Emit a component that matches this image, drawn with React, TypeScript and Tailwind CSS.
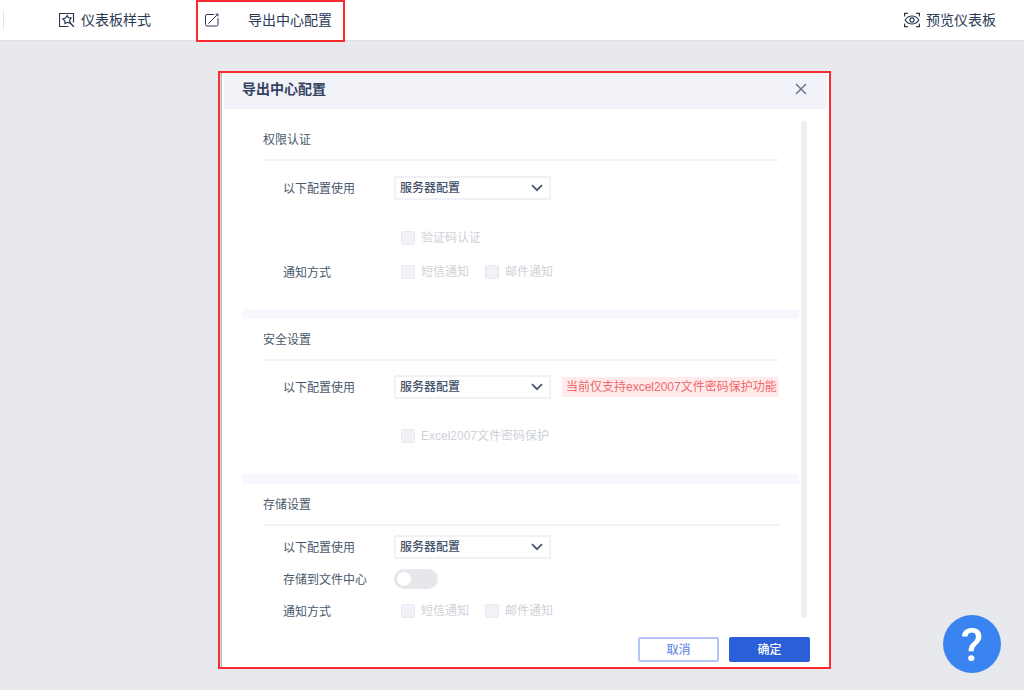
import { useState, type ReactNode } from "react";

const FONT = "font-['Liberation_Sans','Noto_Sans_CJK_SC',sans-serif]";

function StyleIcon() {
  return (
    <svg width="16" height="16" viewBox="0 0 16 16" fill="none" stroke="currentColor" strokeWidth="1.2" aria-hidden="true">
      <path d="M9.5 14.5h-9v-13h14v9" />
      <path d="M8.2 3.6l1.2 2.1 2.7.3-1.5 2.2.6 2.7-2.7-.6-2.5 1.3-.2-2.8-2.1-1.8 2.7-.9z" />
      <path d="M11 10.8l3.8 4" strokeWidth="1.5" />
    </svg>
  );
}

function ExportIcon() {
  return (
    <svg width="14" height="14" viewBox="0 0 14 14" fill="none" stroke="currentColor" strokeWidth="1" aria-hidden="true">
      <path d="M9 1.5H2A1.5 1.5 0 0 0 .5 3v8.500A1.500 1.500 0 0 0 2 13h9.500a1.500 1.500 0 0 0 1.500-1.500V5" />
      <path d="M3.500 10.500L12.800 1.200M10.500 1h2.500v2.500" />
    </svg>
  );
}

function PreviewIcon() {
  return (
    <svg width="16" height="16" viewBox="0 0 16 16" fill="none" stroke="currentColor" strokeWidth="1.2" aria-hidden="true">
      <path d="M.6 4.500V1.400h3.400M12 1.400h3.400v3.100M15.400 11.500v3.100H12M4 14.600H.6v-3.100" />
      <path d="M1.200 8C2.700 5.400 5.200 4 8 4s5.300 1.400 6.800 4c-1.500 2.600-4 4-6.800 4S2.700 10.600 1.200 8z" />
      <circle cx="8" cy="8" r="2.100" />
    </svg>
  );
}

interface SectionProps {
  title: string;
  className: string;
  children: ReactNode;
}

function Section({ title, className, children }: SectionProps) {
  return (
    <section className="pr-5 pl-[21px]">
      <h3 className="flex h-[42px] items-center border-b-2 border-[#f3f3f5] pt-[2px]">{title}</h3>
      <div className={`flex flex-col pl-5 ${className}`}>{children}</div>
    </section>
  );
}

function Divider() {
  return <div className="h-[10px] bg-[#f7f8fd]" />;
}

interface RowProps {
  label?: string;
  htmlFor?: string;
  children: ReactNode;
}

function Row({ label, htmlFor, children }: RowProps) {
  return (
    <div className="flex h-6 items-center">
      <div className="w-[111px] shrink-0 pt-[2px]">
        {htmlFor ? <label htmlFor={htmlFor}>{label}</label> : label}
      </div>
      {children}
    </div>
  );
}

function ConfigSelect({ id }: { id: string }) {
  return (
    <div className="relative h-6 w-[157px] shrink-0">
      <select
        id={id}
        className="block h-6 w-full appearance-none rounded-xs border-2 border-[#f0f1f4] bg-white pr-6 pl-1 font-medium text-[#44526a]"
      >
        <option>服务器配置</option>
      </select>
      <svg
        className="pointer-events-none absolute top-2 right-2"
        width="12"
        height="8"
        viewBox="0 0 12 8"
        fill="none"
        stroke="#4a5a6e"
        strokeWidth="1.8"
        aria-hidden="true"
      >
        <path d="M1 1.2l5 5 5-5" />
      </svg>
    </div>
  );
}

function DisabledCheck({ label }: { label: string }) {
  return (
    <label className="flex items-center gap-[6px] text-[#ced2d8]">
      <input
        type="checkbox"
        disabled
        className="h-[14px] w-[14px] appearance-none rounded-xs border border-[#e8eaf0] bg-[#f2f3f8]"
      />
      {label}
    </label>
  );
}

function NoticeRow() {
  return (
    <Row label="通知方式">
      <div className="flex gap-4 pl-[7px]">
        <DisabledCheck label="短信通知" />
        <DisabledCheck label="邮件通知" />
      </div>
    </Row>
  );
}

function ExportDialog() {
  const [toFileCenter, setToFileCenter] = useState(false);

  return (
    <div
      role="dialog"
      aria-labelledby="dialog-title"
      className="mx-auto w-full max-w-[613px] border-2 border-[#fb2a30] bg-[#d9dbdf] pl-px text-xs text-[#4a586c]"
    >
      <div className="border-l border-[#b4b7bc] bg-white">
        <header className="mx-[2px] flex h-9 items-center justify-between bg-[#f2f3f8] pr-[18px] pb-1 pl-[18px]">
          <h2 id="dialog-title" className="text-sm font-bold text-[#34435f]">
            导出中心配置
          </h2>
          <button type="button" aria-label="关闭" className="flex h-4 w-4 items-center justify-center text-[#6a7890]">
            <svg width="12" height="12" viewBox="0 0 12 12" fill="none" stroke="currentColor" strokeWidth="1.5" aria-hidden="true">
              <path d="M1 1l10 10M11 1L1 11" />
            </svg>
          </button>
        </header>

        <div className="flex gap-[2px] pt-[10px] pr-[22px] pl-5">
          <div className="min-w-0 flex-1">
            <Section title="权限认证" className="pt-[15px] pb-[25px]">
              <Row label="以下配置使用" htmlFor="auth-config">
                <ConfigSelect id="auth-config" />
              </Row>
              <div className="flex flex-col gap-[10px] pt-[26px]">
                <Row>
                  <div className="pl-[7px]">
                    <DisabledCheck label="验证码认证" />
                  </div>
                </Row>
                <NoticeRow />
              </div>
            </Section>
            <Divider />
            <Section title="安全设置" className="pt-[14px] pb-[26px]">
              <Row label="以下配置使用" htmlFor="security-config">
                <ConfigSelect id="security-config" />
                <span className="ml-[11px] h-5 min-w-0 flex-1 overflow-hidden bg-[#ffebeb] pl-1 leading-5 whitespace-nowrap text-[#f0686a]">
                  当前仅支持excel2007文件密码保护功能
                </span>
              </Row>
              <div className="pt-[25px]">
                <Row>
                  <div className="pl-[7px]">
                    <DisabledCheck label="Excel2007文件密码保护" />
                  </div>
                </Row>
              </div>
            </Section>
            <Divider />
            <Section title="存储设置" className="gap-2 pt-[9px]">
              <Row label="以下配置使用" htmlFor="storage-config">
                <ConfigSelect id="storage-config" />
              </Row>
              <Row label="存储到文件中心" htmlFor="file-center">
                <input
                  id="file-center"
                  type="checkbox"
                  role="switch"
                  checked={toFileCenter}
                  onChange={(e) => setToFileCenter(e.target.checked)}
                  className="flex h-5 w-11 appearance-none items-center rounded-full bg-[#e6e7eb] px-[3px] before:h-[14px] before:w-[14px] before:rounded-full before:bg-white checked:justify-end checked:bg-[#2b5fda]"
                />
              </Row>
              <NoticeRow />
            </Section>
          </div>
          <div className="mt-[2px] mb-[5px] w-[6px] rounded-full bg-[#edeef2]" />
        </div>

        <footer className="flex justify-end gap-[10px] pt-[14px] pr-[19px] pb-[5px]">
          <button type="button" className="h-[25px] w-[81px] rounded-xs border-2 border-[#b4c6f5] bg-white font-medium text-[#6f90e8]">
            取消
          </button>
          <button type="button" className="h-[25px] w-[81px] rounded-xs bg-[#2b5fda] font-medium text-white">
            确定
          </button>
        </footer>
      </div>
    </div>
  );
}

export default function App() {
  return (
    <div className={`min-h-screen bg-[#e8e9ed] ${FONT}`}>
      <nav className="flex h-[41px] items-center border-b border-[#dfe1e5] bg-white text-sm text-[#2b3a55]">
        <div className="ml-[3px] h-5 w-px bg-[#e3e5e9]" />
        <button type="button" className="ml-[55px] flex items-center gap-[6px]">
          <StyleIcon />
          仪表板样式
        </button>
        <button
          type="button"
          className="ml-[45px] flex h-[42px] items-center gap-[29px] self-start border-2 border-[#fb2a30] pr-[11px] pb-[2px] pl-[7px]"
        >
          <ExportIcon />
          导出中心配置
        </button>
        <button type="button" className="mr-7 ml-auto flex items-center gap-[6px]">
          <PreviewIcon />
          预览仪表板
        </button>
      </nav>

      <main className="pt-[30px] pb-5 pl-[25px]">
        <ExportDialog />
      </main>

      <button
        type="button"
        aria-label="帮助"
        className="fixed right-[23px] bottom-[17px] flex h-[58px] w-[58px] items-center justify-center rounded-full bg-[#3a84f2] pt-[2px] font-[Roboto,sans-serif] text-[46px] leading-none font-medium text-white"
      >
        ?
      </button>
    </div>
  );
}
